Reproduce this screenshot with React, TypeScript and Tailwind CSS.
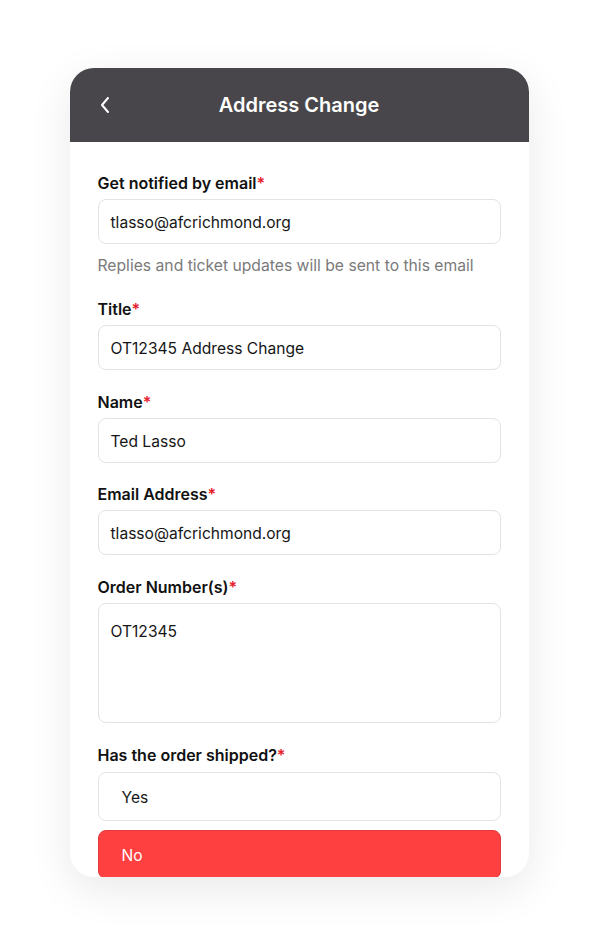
import React from 'react';

const Label = ({ text }: { text: string }) => (
  <p className="text-[16px] leading-5 font-semibold text-[#111111]">
    {text}
    <span className="text-[#e5222c]">*</span>
  </p>
);

const TextField = ({ value, tall }: { value: string; tall?: boolean }) => (
  <div
    className={`mt-[6px] rounded-lg border border-[#e3e3e3] bg-white px-[12px] text-[15.6px] text-[#161616] ${
      tall ? 'h-[120px] pt-[16px]' : 'h-[45px] flex items-center pt-[3px]'
    }`}
  >
    {value}
  </div>
);

export default function App() {
  return (
    <div className="min-h-[946px] bg-white pt-[68px]" style={{ fontFamily: 'Inter, "Noto Sans", sans-serif' }}>
      <div className="mx-auto h-[809px] w-[459px] overflow-hidden rounded-[24px] bg-white shadow-[0_12px_44px_rgba(0,0,0,0.09)]">
        <div className="relative flex h-[74px] items-center justify-center bg-[#48464a]">
          <svg
            className="absolute left-[29px] top-[28px]"
            width="12"
            height="18"
            viewBox="0 0 12 18"
            fill="none"
            stroke="white"
            strokeWidth="2"
            strokeLinecap="round"
            strokeLinejoin="round"
          >
            <path d="M9 2 L3 9 L9 16" />
          </svg>
          <h1 className="text-[20px] font-semibold text-white">Address Change</h1>
        </div>

        <div className="px-[28px] pt-[31px]">
          <Label text="Get notified by email" />
          <TextField value="tlasso@afcrichmond.org" />
          <p className="mt-[12px] text-[15.7px] leading-5 text-[#7a7a7a]">
            Replies and ticket updates will be sent to this email
          </p>

          <div className="mt-[23px]">
            <Label text="Title" />
            <TextField value="OT12345 Address Change" />
          </div>

          <div className="mt-[22px]">
            <Label text="Name" />
            <TextField value="Ted Lasso" />
          </div>

          <div className="mt-[21px]">
            <Label text="Email Address" />
            <TextField value="tlasso@afcrichmond.org" />
          </div>

          <div className="mt-[22px]">
            <Label text="Order Number(s)" />
            <TextField value="OT12345" tall />
          </div>

          <div className="mt-[22px]">
            <Label text="Has the order shipped?" />
            <div className="mt-[7px] flex h-[49px] items-center rounded-lg border border-[#e3e3e3] bg-white px-[23px] pt-[3px] text-[15.6px] text-[#161616]">
              Yes
            </div>
            <div className="mt-[9px] flex h-[49px] items-center rounded-lg border border-[#e23a3c] bg-[#ff4040] px-[23px] pt-[3px] text-[15.6px] text-white">
              No
            </div>
          </div>
        </div>
      </div>
    </div>
  );
}
